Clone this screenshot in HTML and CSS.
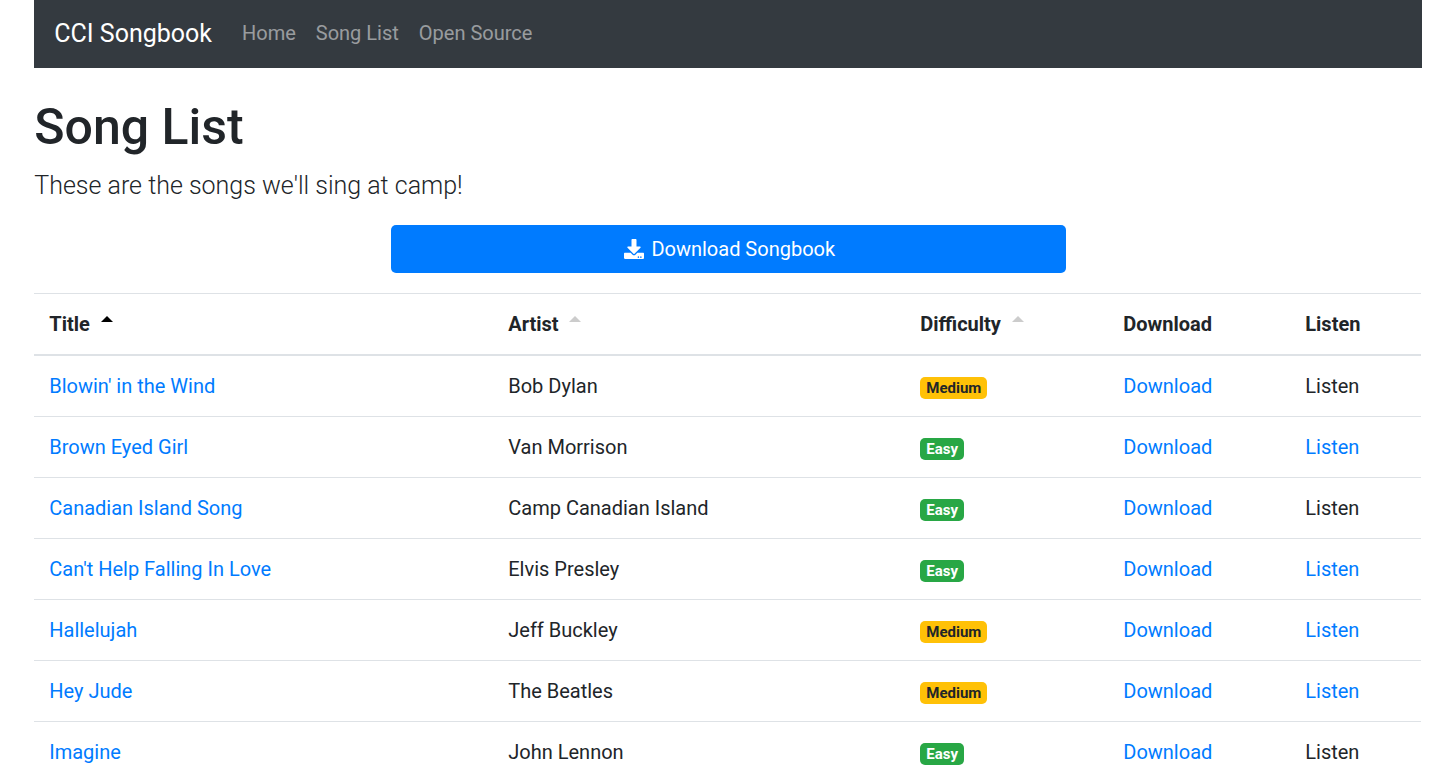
FILE: index.html
```html
<!DOCTYPE html>
<html lang="en">
<head>
<meta charset="utf-8">
<title>CCI Songbook</title>
<link rel="stylesheet" href="styles.css">
</head>
<body>
<div class="container">
  <nav class="navbar">
    <a class="brand" href="#">CCI Songbook</a>
    <a class="nav-link" href="#">Home</a>
    <a class="nav-link" href="#">Song List</a>
    <a class="nav-link" href="#">Open Source</a>
  </nav>
  <h1 class="title">Song List</h1>
  <p class="lead">These are the songs we'll sing at camp!</p>
  <div class="download-row">
    <a class="btn" href="#">
      <svg class="btn-icon" viewBox="0 0 512 512" aria-hidden="true"><path fill="currentColor" d="M216 0h80c13.3 0 24 10.7 24 24v168h87.7c17.8 0 26.7 21.5 14.1 34.1L269.7 378.3c-7.5 7.5-19.8 7.5-27.3 0L90.1 226.1c-12.6-12.6-3.7-34.1 14.1-34.1H192V24c0-13.3 10.7-24 24-24zm296 376v112c0 13.3-10.7 24-24 24H24c-13.3 0-24-10.7-24-24V376c0-13.3 10.7-24 24-24h146.7l49 49c20.1 20.1 52.5 20.1 72.6 0l49-49H488c13.3 0 24 10.7 24 24zm-124 88c0-11-9-20-20-20s-20 9-20 20 9 20 20 20 20-9 20-20zm64 0c0-11-9-20-20-20s-20 9-20 20 9 20 20 20 20-9 20-20z"/></svg>
      Download Songbook
    </a>
  </div>
  <table class="songs">
    <colgroup>
      <col class="col-title"><col class="col-artist"><col class="col-diff"><col class="col-dl"><col class="col-listen">
    </colgroup>
    <thead>
      <tr>
        <th>Title<span class="caret caret-active"></span></th>
        <th>Artist<span class="caret"></span></th>
        <th>Difficulty<span class="caret"></span></th>
        <th>Download</th>
        <th>Listen</th>
      </tr>
    </thead>
    <tbody>
      <tr><td><a href="#">Blowin' in the Wind</a></td><td>Bob Dylan</td><td><span class="badge badge-medium">Medium</span></td><td><a href="#">Download</a></td><td>Listen</td></tr>
      <tr><td><a href="#">Brown Eyed Girl</a></td><td>Van Morrison</td><td><span class="badge badge-easy">Easy</span></td><td><a href="#">Download</a></td><td><a href="#">Listen</a></td></tr>
      <tr><td><a href="#">Canadian Island Song</a></td><td>Camp Canadian Island</td><td><span class="badge badge-easy">Easy</span></td><td><a href="#">Download</a></td><td>Listen</td></tr>
      <tr><td><a href="#">Can't Help Falling In Love</a></td><td>Elvis Presley</td><td><span class="badge badge-easy">Easy</span></td><td><a href="#">Download</a></td><td><a href="#">Listen</a></td></tr>
      <tr><td><a href="#">Hallelujah</a></td><td>Jeff Buckley</td><td><span class="badge badge-medium">Medium</span></td><td><a href="#">Download</a></td><td><a href="#">Listen</a></td></tr>
      <tr><td><a href="#">Hey Jude</a></td><td>The Beatles</td><td><span class="badge badge-medium">Medium</span></td><td><a href="#">Download</a></td><td><a href="#">Listen</a></td></tr>
      <tr><td><a href="#">Imagine</a></td><td>John Lennon</td><td><span class="badge badge-easy">Easy</span></td><td><a href="#">Download</a></td><td>Listen</td></tr>
    </tbody>
  </table>
</div>
</body>
</html>
```
FILE: styles.css
```css
* { box-sizing: border-box; }
html { font-size: 20px; overflow: hidden; }
body {
  margin: 0;
  height: 781px;
  overflow: hidden;
  background: #fff;
  color: #212529;
  font-family: Roboto, "Liberation Sans", sans-serif;
  font-size: 20px;
  line-height: 1.5;
}
a { color: #007bff; text-decoration: none; }
.container { margin: 0 30.75px 0 34.25px; }
.navbar {
  display: flex;
  align-items: center;
  height: 67.5px;
  margin-right: -0.5px;
  padding: 10px 20px;
  background: #343a40;
}
.brand { margin-right: 20px; padding: 5px 0; font-size: 25px; line-height: 37.5px; color: #fff; }
.nav-link { padding: 9.5px 10px 10.5px; color: rgba(255,255,255,.5); }
.title { margin: 29.5px 0 10px; font-size: 50px; font-weight: 500; line-height: 60px; }
.lead { margin: 0 0 20px; font-size: 25px; font-weight: 300; line-height: 37.5px; }
.download-row { display: flex; justify-content: center; padding-left: 1px; }
.btn {
  display: flex;
  align-items: center;
  justify-content: center;
  gap: 7px;
  width: 675px;
  height: 48px;
  padding-left: 3px;
  border-radius: 5px;
  background: #007bff;
  color: #fff;
}
.btn-icon { width: 20px; height: 20px; }
.songs { width: 100%; margin-top: 20px; border-collapse: collapse; table-layout: fixed; }
.col-title { width: 459px; }
.col-artist { width: 412px; }
.col-diff { width: 203px; }
.col-dl { width: 182px; }
.songs th, .songs td { padding: 15px; text-align: left; vertical-align: top; border-top: 1px solid #dee2e6; }
.songs th { font-weight: 700; border-bottom: 2px solid #dee2e6; }
.caret {
  display: inline-block;
  vertical-align: 9px;
  margin-left: 10.75px;
  border-left: 6px solid transparent;
  border-right: 6px solid transparent;
  border-bottom: 6px solid #ccc;
}
.caret-active { border-bottom-color: #000; }
.badge {
  display: inline-block;
  padding: 3.75px 6px;
  border-radius: 5px;
  font-size: 15px;
  font-weight: 700;
  line-height: 1;
  vertical-align: baseline;
}
.badge-medium { background: #ffc107; color: #212529; }
.badge-easy { background: #28a745; color: #fff; }
```
